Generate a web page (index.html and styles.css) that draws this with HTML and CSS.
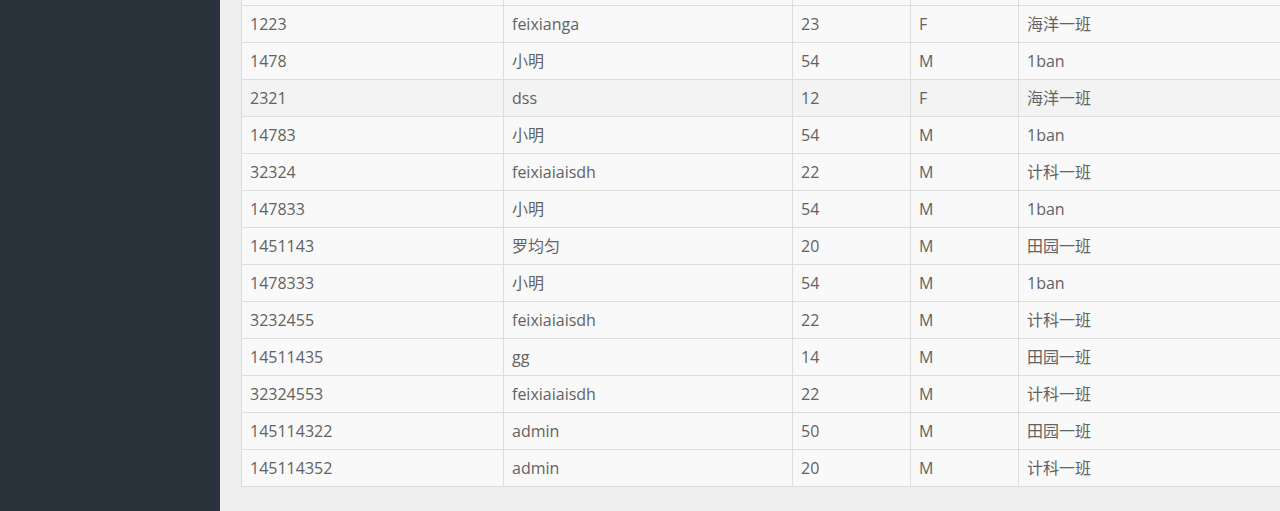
FILE: index.html
```html
<!DOCTYPE html>
<html lang="zh">
<head>
<meta charset="utf-8">
<title>学生列表</title>
<link rel="stylesheet" href="styles.css">
</head>
<body>
<div class="layout">
  <aside class="sidebar"></aside>
  <main class="main">
    <table class="grid">
      <colgroup>
        <col class="c1"><col class="c2"><col class="c3"><col class="c4"><col class="c5">
      </colgroup>
      <tbody>
        <tr class="spacer"><td></td><td></td><td></td><td></td><td></td></tr>
        <tr><td>1223</td><td>feixianga</td><td>23</td><td>F</td><td>海洋一班</td></tr>
        <tr><td>1478</td><td>小明</td><td>54</td><td>M</td><td>1ban</td></tr>
        <tr class="hover"><td>2321</td><td>dss</td><td>12</td><td>F</td><td>海洋一班</td></tr>
        <tr><td>14783</td><td>小明</td><td>54</td><td>M</td><td>1ban</td></tr>
        <tr><td>32324</td><td>feixiaiaisdh</td><td>22</td><td>M</td><td>计科一班</td></tr>
        <tr><td>147833</td><td>小明</td><td>54</td><td>M</td><td>1ban</td></tr>
        <tr><td>1451143</td><td>罗均匀</td><td>20</td><td>M</td><td>田园一班</td></tr>
        <tr><td>1478333</td><td>小明</td><td>54</td><td>M</td><td>1ban</td></tr>
        <tr><td>3232455</td><td>feixiaiaisdh</td><td>22</td><td>M</td><td>计科一班</td></tr>
        <tr><td>14511435</td><td>gg</td><td>14</td><td>M</td><td>田园一班</td></tr>
        <tr><td>32324553</td><td>feixiaiaisdh</td><td>22</td><td>M</td><td>计科一班</td></tr>
        <tr><td>145114322</td><td>admin</td><td>50</td><td>M</td><td>田园一班</td></tr>
        <tr><td>145114352</td><td>admin</td><td>20</td><td>M</td><td>计科一班</td></tr>
      </tbody>
    </table>
  </main>
</div>
</body>
</html>
```
FILE: styles.css
```css
html, body {
  margin: 0;
  padding: 0;
  height: 100%;
  overflow: hidden;
}
body {
  font-family: "Open Sans", "Noto Sans CJK SC", sans-serif;
  font-size: 16px;
  color: #626262;
  background: #eeeeee;
}
.layout {
  display: flex;
  height: 100vh;
}
.sidebar {
  flex: 0 0 220px;
  background: #2a323c;
}
.main {
  flex: 1 1 auto;
  padding: 0 0 0 21px;
  overflow: hidden;
}
.grid {
  margin-top: -32px;
  border-collapse: collapse;
  table-layout: fixed;
  width: 1300px;
}
.c1 { width: 262px; }
.c2 { width: 289px; }
.c3 { width: 118px; }
.c4 { width: 108px; }
.c5 { width: auto; }
.grid td {
  border: 1px solid #dddddd;
  padding: 8px 8px;
  height: 20px;
  line-height: 20px;
  background: #f9f9f9;
  white-space: nowrap;
}
.grid tr.hover td {
  background: #f3f3f3;
}
```
